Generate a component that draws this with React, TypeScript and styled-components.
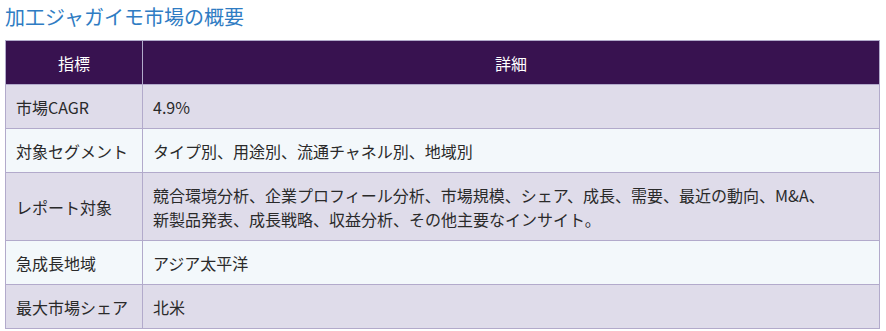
import React from "react";
import styled, { createGlobalStyle } from "styled-components";

const GlobalStyle = createGlobalStyle`
  body {
    margin: 0;
    background: #ffffff;
    font-family: "Noto Sans CJK JP", "Noto Sans", sans-serif;
  }
`;

const Wrapper = styled.div`
  padding: 0 5px;
`;

const Title = styled.h2`
  margin: 0 0 7px;
  font-size: 20px;
  line-height: 33px;
  font-weight: 400;
  color: #2f7cc3;
`;

const Table = styled.table`
  width: 875px;
  border-collapse: collapse;
  font-size: 16px;
  line-height: 24px;
  color: #2a2a2a;
`;

const HeadCell = styled.th<{ $narrow?: boolean }>`
  background: #381250;
  color: #ffffff;
  font-weight: 400;
  text-align: center;
  padding: 9.5px 10px;
  border: 1px solid #b2aacb;
  width: ${(p) => (p.$narrow ? "116px" : "auto")};
`;

const Row = styled.tr<{ $alt: boolean }>`
  background: ${(p) => (p.$alt ? "#f3f8fb" : "#dfdcea")};
`;

const Cell = styled.td<{ $label?: boolean }>`
  padding: 9.5px 10px;
  border: 1px solid #b2aacb;
  vertical-align: middle;
  width: ${(p) => (p.$label ? "116px" : "auto")};
  white-space: ${(p) => (p.$label ? "nowrap" : "normal")};
`;

const rows: [string, React.ReactNode][] = [
  ["市場CAGR", "4.9%"],
  ["対象セグメント", "タイプ別、用途別、流通チャネル別、地域別"],
  [
    "レポート対象",
    <>
      競合環境分析、企業プロフィール分析、市場規模、シェア、成長、需要、最近の動向、M&amp;A、
      <br />
      新製品発表、成長戦略、収益分析、その他主要なインサイト。
    </>,
  ],
  ["急成長地域", "アジア太平洋"],
  ["最大市場シェア", "北米"],
];

const App: React.FC = () => {
  return (
    <>
      <GlobalStyle />
      <Wrapper>
        <Title>加工ジャガイモ市場の概要</Title>
        <Table>
          <thead>
            <tr>
              <HeadCell $narrow>指標</HeadCell>
              <HeadCell>詳細</HeadCell>
            </tr>
          </thead>
          <tbody>
            {rows.map(([label, value], i) => (
              <Row key={label} $alt={i % 2 === 1}>
                <Cell $label>{label}</Cell>
                <Cell>{value}</Cell>
              </Row>
            ))}
          </tbody>
        </Table>
      </Wrapper>
    </>
  );
};

export default App;
